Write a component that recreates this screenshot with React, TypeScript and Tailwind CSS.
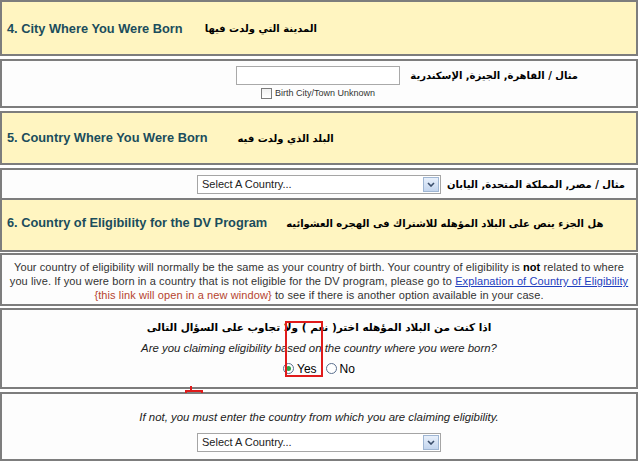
const ar = { fontFamily: '"DejaVu Sans", Tahoma, sans-serif' };

function Box({ className = "", children }: { className?: string; children?: React.ReactNode }) {
  return <div className={`border-2 border-[#7d7d7d] ${className}`}>{children}</div>;
}

function Heading({ en, arText, gap, className = "" }: { en: string; arText: string; gap: string; className?: string }) {
  return (
    <div className={`flex h-full items-center pl-[5px] ${className}`}>
      <span className="text-[12.8px] font-bold text-[#1b4d5c]">{en}</span>
      <span dir="rtl" className={`text-[10px] font-bold text-black ${gap}`} style={ar}>
        {arText}
      </span>
    </div>
  );
}

function FakeSelect() {
  return (
    <div className="flex h-[19px] w-[244px] items-center border border-[#a5a5a5] bg-white pl-[4px] text-[11px] text-[#222]">
      <span className="flex-1">Select A Country...</span>
      <span className="mr-[1px] flex h-[15px] w-[16px] items-center justify-center border border-[#9fb6d3] bg-gradient-to-b from-[#e8f0fb] to-[#c3d5ee]">
        <svg width="8" height="5" viewBox="0 0 8 5">
          <path d="M1 1 L4 4 L7 1" stroke="#3b4e6b" strokeWidth="1.6" fill="none" />
        </svg>
      </span>
    </div>
  );
}

function Radio({ checked }: { checked?: boolean }) {
  return (
    <span className="flex h-[11px] w-[11px] items-center justify-center rounded-full border border-[#5a6f8e] bg-white">
      {checked && <span className="h-[5px] w-[5px] rounded-full bg-[#2fa34a]" />}
    </span>
  );
}

export default function App() {
  return (
    <div className="relative w-[640px] h-[463px] overflow-hidden bg-white" style={{ fontFamily: '"Liberation Sans", Arial, "DejaVu Sans", sans-serif' }}>
      <div className="flex w-[638px] flex-col gap-[3px]">
        <Box className="h-[56px] bg-[#fff5c1]">
          <Heading en="4. City Where You Were Born" arText="المدينة التي ولدت فيها" gap="ml-[22px]" className="pt-[1px]" />
        </Box>

        <Box className="h-[49px] bg-[#fdfdfd]">
          <div className="flex justify-end pr-[58px] pt-[5px]">
            <div className="flex flex-col items-center">
              <div className="h-[19px] w-[164px] border border-[#a9a9a9] bg-white" />
              <div className="mt-[2px] flex items-center gap-[3px]">
                <span className="h-[11px] w-[11px] border border-[#7b7b7b] bg-gradient-to-b from-[#f0f0f0] to-white" />
                <span className="text-[9px] text-[#333]">Birth City/Town Unknown</span>
              </div>
            </div>
            <span dir="rtl" className="mt-[2px] w-[178px] text-[10px] font-bold text-black" style={ar}>
              مثال / القاهرة, الجيزة, الإسكندرية
            </span>
          </div>
        </Box>

        <Box className="h-[54px] bg-[#fff5c1]">
          <Heading en="5. Country Where You Were Born" arText="البلد الذي ولدت فيه" gap="ml-[30px]" />
        </Box>

        <Box className="bg-[#fff5c1]">
          <div className="flex h-[28px] items-center justify-end bg-[#fdfdfd] pr-[11px]">
            <FakeSelect />
            <span dir="rtl" className="w-[184px] text-[10px] font-bold text-black" style={ar}>
              مثال / مصر, المملكة المتحدة, اليابان
            </span>
          </div>
          <div className="h-[52px] border-t-2 border-[#7d7d7d]">
            <Heading en="6. Country of Eligibility for the DV Program" arText="هل الجزء ينص على البلاد المؤهله للاشتراك فى الهجره العشوائيه" gap="ml-[19px]" className="pb-[4px]" />
          </div>
        </Box>

        <Box className="-mt-[2px] h-[53px] bg-[#fdfdfd]">
          <p className="pt-[5px] text-center text-[11px] leading-[14px] tracking-[0.1px] text-[#333]">
            Your country of eligibility will normally be the same as your country of birth. Your country of eligibility is <b className="text-black">not</b> related to where
            <br />
            you live. If you were born in a country that is not eligible for the DV program, please go to{" "}
            <span className="text-[#1f3fbf] underline">Explanation of Country of Eligibility</span>
            <br />
            <span className="text-[#b5442f]">{"{this link will open in a new window}"}</span> to see if there is another option available in your case.
          </p>
        </Box>

        <Box className="-mt-[1px] h-[81px] bg-[#fdfdfd]">
          <div className="flex flex-col items-center pt-[10px]">
            <span dir="rtl" className="text-[10.5px] font-bold text-black" style={ar}>
              اذا كنت من البلاد المؤهله اختر( نعم ) ولا تجاوب على السؤال التالى
            </span>
            <span className="mt-[4px] text-[11.4px] italic text-[#222]">Are you claiming eligibility based on the country where you were born?</span>
            <div className="mt-[3px] flex items-center text-[12px] text-black">
              <Radio checked />
              <span className="ml-[3px]">Yes</span>
              <span className="ml-[9px]"><Radio /></span>
              <span className="ml-[3px]">No</span>
            </div>
          </div>
        </Box>

        <Box className="h-[69px] bg-[#fdfdfd]">
          <div className="flex flex-col items-center pt-[15px]">
            <span className="text-[11.4px] italic text-[#222]">If not, you must enter the country from which you are claiming eligibility.</span>
            <div className="mt-[7px]">
              <FakeSelect />
            </div>
          </div>
        </Box>
      </div>

      {/* annotation marks */}
      <div className="absolute left-[285px] top-[321px] h-[56px] w-[38px] border-2 border-[#e01b1b]" />
      <svg className="absolute left-[185px] top-[385px]" width="18" height="10" viewBox="0 0 18 10">
        <path d="M1 8 V6 H17 V8 M6 6 V1" stroke="#e01b1b" strokeWidth="2" fill="none" />
      </svg>
    </div>
  );
}
